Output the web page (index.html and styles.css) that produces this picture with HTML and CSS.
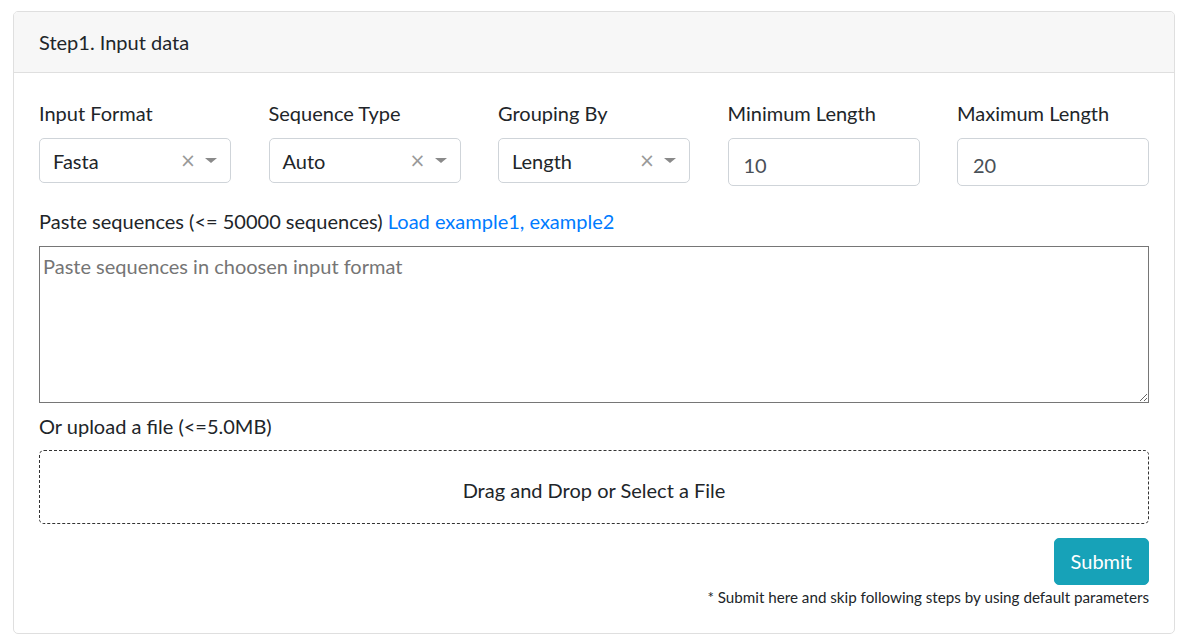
FILE: index.html
```html
<!DOCTYPE html>
<html lang="en">
<head>
<meta charset="utf-8">
<title>Step1. Input data</title>
<link rel="stylesheet" href="styles.css">
</head>
<body>
<div class="page">
  <div class="card">
    <div class="card-header">Step1. Input data</div>
    <div class="card-body">
      <div class="param-row">
        <div class="field">
          <label class="label">Input Format</label>
          <div class="select">
            <span class="select-value">Fasta</span>
            <span class="select-clear">×</span>
            <span class="select-arrow"></span>
          </div>
        </div>
        <div class="field">
          <label class="label">Sequence Type</label>
          <div class="select">
            <span class="select-value">Auto</span>
            <span class="select-clear">×</span>
            <span class="select-arrow"></span>
          </div>
        </div>
        <div class="field">
          <label class="label">Grouping By</label>
          <div class="select">
            <span class="select-value">Length</span>
            <span class="select-clear">×</span>
            <span class="select-arrow"></span>
          </div>
        </div>
        <div class="field">
          <label class="label">Minimum Length</label>
          <input class="input" type="text" value="10">
        </div>
        <div class="field">
          <label class="label">Maximum Length</label>
          <input class="input" type="text" value="20">
        </div>
      </div>

      <label class="label">Paste sequences (&lt;= 50000 sequences) <a class="link" href="#">Load example1</a><span class="link">, </span><a class="link" href="#">example2</a></label>
      <textarea class="seq-area" placeholder="Paste sequences in choosen input format"></textarea>

      <label class="label upload-label">Or upload a file (&lt;=5.0MB)</label>
      <div class="dropzone">Drag and Drop or Select a File</div>

      <div class="submit-row">
        <button class="btn-submit" type="button">Submit</button>
        <div class="note">* Submit here and skip following steps by using default parameters</div>
      </div>
    </div>
  </div>
</div>
</body>
</html>
```
FILE: styles.css
```css
* { box-sizing: border-box; }

body {
  margin: 0;
  font-family: "Lato", "Liberation Sans", sans-serif;
  font-size: 20px;
  line-height: 1.5;
  color: #212529;
  background: #fff;
}

.page {
  padding: 11px 8px 0 13px;
}

.card {
  width: 1162px;
  border: 1px solid #dfdfdf;
  border-radius: 5px;
  background: #fff;
}

.card-header {
  padding: 15px 25px;
  background: #f7f7f7;
  border-bottom: 1px solid #dfdfdf;
  border-radius: 4px 4px 0 0;
  height: 61px;
}

.card-body {
  padding: 25px;
}

.param-row {
  display: grid;
  grid-template-columns: repeat(5, 1fr);
  column-gap: 37.5px;
  margin-bottom: 20px;
}

.field {
  display: flex;
  flex-direction: column;
}

.label {
  display: block;
  margin-bottom: 10px;
  height: 30px;
}

.select {
  display: flex;
  align-items: center;
  height: 45px;
  border: 1px solid #cfd4d9;
  border-radius: 5px;
  padding: 0 13px 0 13px;
  color: #212529;
}

.select-value {
  flex: 1;
}

.select-clear {
  color: #999;
  font-family: "DejaVu Sans", sans-serif;
  font-size: 19px;
  margin-right: 9px;
  line-height: 1;
}

.select-arrow {
  width: 0;
  height: 0;
  border-left: 6px solid transparent;
  border-right: 6px solid transparent;
  border-top: 5px solid #8a8a8a;
}

.input {
  height: 47.5px;
  border: 1px solid #cfd4d9;
  border-radius: 5px;
  padding: 6px 15px 0;
  font-family: inherit;
  font-size: 20px;
  color: #495057;
  width: 100%;
}

.link {
  color: #007bff;
  text-decoration: none;
}

.seq-area {
  display: block;
  width: 100%;
  height: 157px;
  margin: 0;
  padding: 4px 3px;
  border: 1px solid #767676;
  border-radius: 0;
  font-family: inherit;
  font-size: 20px;
  line-height: 1.5;
  color: #212529;
}

.seq-area::placeholder {
  color: #757575;
}

.upload-label {
  margin-top: 8px;
  margin-bottom: 9px;
}

.dropzone {
  height: 74px;
  border: 1px dashed #333;
  border-radius: 5px;
  display: flex;
  align-items: center;
  justify-content: center;
  padding-top: 6px;
  color: #212529;
}

.submit-row {
  margin-top: 14px;
  display: flex;
  flex-direction: column;
  align-items: flex-end;
}

.btn-submit {
  height: 47px;
  padding: 0 16px;
  border: 1px solid #17a2b8;
  border-radius: 5px;
  background: #17a2b8;
  color: #fff;
  font-family: inherit;
  font-size: 20px;
  line-height: 1.5;
}

.note {
  font-size: 15.2px;
  line-height: 1.5;
  margin-top: 1px;
}
```
